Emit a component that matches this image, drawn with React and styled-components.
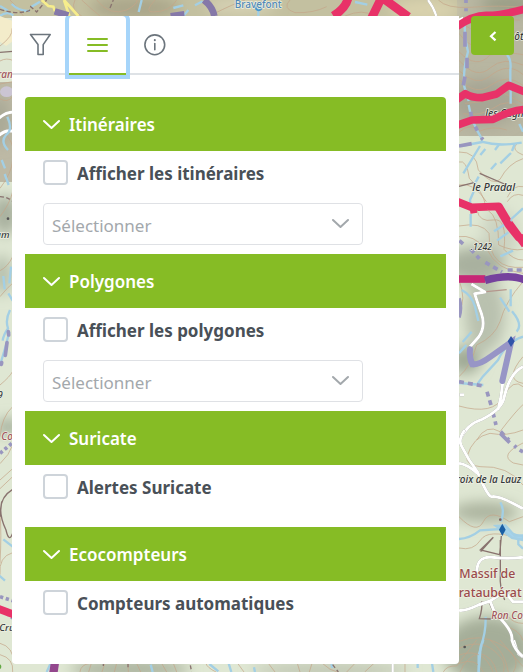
import React from "react";
import styled, { createGlobalStyle } from "styled-components";

const GlobalStyle = createGlobalStyle`
  * { box-sizing: border-box; }
  body {
    margin: 0;
    background: #dce4cf;
    font-family: "Noto Sans", "Open Sans", sans-serif;
    color: #495057;
  }
`;

const green = "#86bc25";

const MapCanvas = styled.svg`
  position: fixed;
  inset: 0;
  width: 100%;
  height: 100%;
  z-index: -1;
`;

const Page = styled.div`
  display: flex;
  align-items: flex-start;
  gap: 12px;
  min-height: 100vh;
  padding: 16px 9px 8px 12px;
`;

const Panel = styled.main`
  flex: 1;
  min-width: 0;
  min-height: calc(100vh - 24px);
  background: #fff;
  border-radius: 0 0 4px 4px;
  overflow: hidden;
`;

const TabList = styled.div`
  display: flex;
  border-bottom: 2px solid #dee2e6;
`;

const Tab = styled.button`
  display: flex;
  align-items: center;
  justify-content: center;
  width: 57px;
  height: 59px;
  margin-bottom: -2px;
  padding: 0;
  border: 0;
  border-bottom: 2px solid ${(p) => (p.$active ? green : "transparent")};
  border-radius: ${(p) => (p.$active ? "4px 4px 0 0" : "0")};
  background: none;
  color: ${(p) => (p.$active ? green : "#6c757d")};
  box-shadow: ${(p) => (p.$active ? "0 0 0 4px #a6d5fa" : "none")};
  outline: none;
  cursor: pointer;
`;

const TabIcon = styled.svg`
  width: 23px;
  height: 23px;
  fill: none;
  stroke: currentColor;
`;

const Accordion = styled.div`
  padding: 22px 13px 12px;
`;

const SectionHeader = styled.button`
  display: flex;
  align-items: center;
  gap: 9px;
  width: 100%;
  height: 54px;
  padding: 2px 18px 0;
  border: 0;
  border-radius: ${(p) => (p.$first ? "4px 4px 0 0" : "0")};
  background: ${green};
  color: #fff;
  font: 600 17px/24px "Noto Sans", "Open Sans", sans-serif;
  text-align: left;
  cursor: pointer;
`;

const Chevron = styled.svg`
  width: 17px;
  height: 17px;
  fill: none;
  stroke: currentColor;
  stroke-width: 2;
  stroke-linecap: round;
  stroke-linejoin: round;
`;

const SectionBody = styled.div`
  display: flex;
  flex-direction: column;
  gap: 18px;
  min-height: 62px;
  padding: 8px 18px 9px;
`;

const CheckRow = styled.label`
  display: flex;
  align-items: center;
  gap: 9px;
  height: 26px;
  font-size: 17px;
  font-weight: 700;
  line-height: 26px;
`;

const CheckText = styled.span`
  padding-top: 3px;
`;

const Checkbox = styled.input`
  appearance: none;
  flex: none;
  width: 25px;
  height: 25px;
  margin: 0;
  border: 2px solid #ced4da;
  border-radius: 4px;
  background: #fff;
  &:checked { background: ${green}; border-color: ${green}; }
`;

const SelectBox = styled.div`
  display: grid;
  align-items: center;
  width: 83%;
  color: #a3a8ac;
  > * { grid-area: 1 / 1; }
  > svg { justify-self: end; margin-right: 14px; pointer-events: none; }
`;

const Select = styled.select`
  appearance: none;
  width: 100%;
  height: 42px;
  padding: 3px 36px 0 8px;
  border: 1px solid #dfe1e5;
  border-radius: 4px;
  background: #fff;
  color: #a3a8ac;
  font: 400 17px/24px "Noto Sans", "Open Sans", sans-serif;
`;

const CollapseButton = styled.button`
  display: flex;
  align-items: center;
  justify-content: center;
  width: 43px;
  height: 39px;
  padding: 0;
  border: 0;
  border-radius: 4px;
  background: ${green};
  color: #fff;
  cursor: pointer;
`;

const Contours = styled.g`
  fill: none;
  stroke: #c4a588;
  stroke-width: 3;
  opacity: 0.7;
`;
const Streams = styled.g`
  fill: none;
  stroke: #a3cfe4;
  stroke-width: 7;
`;
const Roads = styled.g`
  fill: none;
  stroke: #fff;
  stroke-width: 9;
  stroke-linejoin: round;
  filter: drop-shadow(0 0 1px #888);
`;
const Routes = styled.g`
  fill: none;
  stroke: #e83268;
  stroke-width: 23;
  stroke-linejoin: round;
`;
const Boundaries = styled.g`
  fill: none;
  stroke: #9996bf;
  stroke-width: 11;
`;
const Paths = styled.g`
  fill: none;
  stroke: #89736f;
  stroke-width: 4;
`;
const MapLabel = styled.text`
  font-family: "Noto Sans", "Open Sans", sans-serif;
  font-size: ${(p) => p.$size || 30}px;
  font-style: ${(p) => (p.$upright ? "normal" : "italic")};
  font-weight: 500;
  fill: ${(p) => p.$color || "#33373a"};
  stroke: #eef0e2;
  stroke-width: 4px;
  paint-order: stroke;
`;

/* Each strip of the map is drawn at three units per pixel. */
const Tile = ({ x = 0, y = 0, children }) => (
  <g transform={`translate(${x} ${y}) scale(0.33333)`}>{children}</g>
);

function TopTile() {
  return (
    <Tile>
      <Contours>
        <path d="M30 0Q52 20 70 48M225 0Q210 30 245 48M245 0Q275 28 300 48M290 0Q330 50 380 30Q410 15 412 0M465 0Q430 38 460 36Q510 35 530 0M640 42Q700 12 735 0M870 0Q845 25 885 38Q940 40 980 20M1035 48Q1090 25 1120 48M1315 0Q1340 26 1410 22Q1500 15 1569 22" />
      </Contours>
      <Streams>
        <path d="M425 0L416 36M520 24L550 16M585 16L608 4M550 48L565 30M775 24V48M1065 6L1102 14M0 48Q20 32 40 46M35 12Q60 36 90 32M0 18L24 32M120 5L92 22" />
      </Streams>
      <Paths strokeDasharray="13 7">
        <path d="M0 28Q50 45 88 32L92 20L110 36L140 0M330 24L340 0" />
      </Paths>
      <g fill="none" stroke="#f6ed8c" strokeWidth="8">
        <path d="M125 0L145 18L160 20L165 34M192 0L235 48M192 0L208 48" />
      </g>
      <Boundaries>
        <path d="M164 34L205 46M612 0Q638 20 643 48" stroke="#8578a8" strokeWidth="20" />
        <path d="M512 48L553 42" stroke="#8578a8" strokeWidth="18" />
        <path d="M1398 0V48" strokeDasharray="9 16" />
      </Boundaries>
      <Roads><path d="M1284 0Q1301 22 1309 48" strokeWidth="7" /></Roads>
      <Routes>
        <path d="M1044 -5Q1038 24 1000 48M1145 -8L1112 60M1145 -8L1225 50" strokeWidth="26" />
      </Routes>
      <circle cx="776" cy="22" r="9" fill="none" stroke="#4796cf" strokeWidth="5" />
      <MapLabel x="704" y="25" $size={30} $upright $color="#5188b7">Bravefont</MapLabel>
    </Tile>
  );
}

function LeftTiles() {
  return (
    <>
      <Tile>
        <path d="M0 48L36 62V125L18 138L0 125Z" fill="#f3ecca" />
        <ellipse cx="20" cy="275" rx="20" ry="16" fill="#cbc5d3" />
        <Contours>
          <path d="M0 138Q40 108 36 85M0 183Q20 172 40 182M0 252L38 245M0 296Q22 310 38 290M8 398Q30 410 38 440M0 565Q35 520 38 480M0 650Q30 610 38 575M0 812Q24 800 38 770M0 890Q25 860 38 850" />
        </Contours>
        <Roads><path d="M-5 356Q18 336 40 336M-5 408Q15 388 40 394" /></Roads>
        <Streams>
          <path d="M22 350Q40 390 18 405Q0 425 24 450M5 480L15 505M14 522L26 555M33 800L28 850M10 828L14 868M25 880L38 902M30 930Q15 960 24 985Q10 1005 8 1022" />
        </Streams>
        <Paths><path d="M0 157L38 154" /><path d="M0 590Q20 590 38 604" strokeDasharray="12 7" /></Paths>
        <circle cx="24" cy="656" r="4" fill="#555" />
        <MapLabel x="-8" y="235" $color="#a1565c">ran</MapLabel>
        <MapLabel x="-14" y="713" $size={29}>um</MapLabel>
      </Tile>
      <Tile y={330}>
        <Contours>
          <path d="M0 165Q30 140 38 124M0 320Q5 260 38 230M0 401Q28 375 38 345M0 450L38 416M0 476L38 440M0 700Q5 610 0 550M0 734Q-5 680 38 668M0 940Q40 950 42 1000" />
        </Contours>
        <Streams><path d="M10 628L38 650M-4 735L15 752M28 5Q15 60 0 105" /></Streams>
        <Boundaries>
          <path d="M21 38L16 76M26 15L25 5M5 98L4 103" strokeLinecap="round" />
          <path d="M0 370L38 338M0 800L38 812M20 850L38 864" strokeDasharray="10 8" />
        </Boundaries>
        <Paths><path d="M38 478Q-22 515 18 600Q27 640 38 610M5 515L0 560" /></Paths>
        <Routes><path d="M-5 836L42 854" /></Routes>
        <circle cx="-4" cy="1010" r="8" fill="#63a844" />
        <MapLabel x="-7" y="203" $size={27}>9</MapLabel>
        <MapLabel x="4" y="330" $size={30} $color="#a1565c">Col</MapLabel>
        <MapLabel x="-2" y="903" $size={29}>Cru</MapLabel>
      </Tile>
    </>
  );
}

function RightTiles() {
  return (
    <>
      <Tile x={440}>
        <Contours>
          <path d="M57 55Q90 105 130 80T240 60M57 100Q105 165 145 120T249 106M57 155Q110 210 150 165Q210 155 249 164M57 181Q110 242 153 202Q190 170 249 195M57 212Q108 260 145 232Q203 182 249 224M57 238Q110 290 153 255Q203 219 249 256M75 310Q160 306 190 279L249 310M70 341Q118 350 159 325Q202 292 249 324M57 397Q89 366 120 393Q160 376 200 390M57 456Q110 454 115 510Q160 561 180 538Q205 490 249 476M57 486Q80 478 88 535Q130 575 137 618M202 592Q220 553 249 560M57 555Q100 544 139 605M202 605Q220 576 249 586M230 432Q212 450 249 465" />
        </Contours>
        <Streams>
          <path d="M75 60Q71 100 84 155Q68 212 73 260L86 303M86 315Q94 365 123 412L127 426M201 165Q215 180 211 210V247M212 263V311M238 372L249 395M127 426Q75 437 57 437M127 426Q178 440 245 428M120 438L70 520M176 435L165 450M224 432L216 453M136 447L121 465M213 459L181 490M169 490L153 508M116 530L103 554M101 575L90 600L94 637M249 625L214 657" />
        </Streams>
        <Boundaries>
          <path d="M75 95V140M81 173V205M75 230L70 256M76 280L84 292M92 335L94 350M106 380L112 392M124 413L129 419M57 438L95 431" />
        </Boundaries>
        <Paths><path d="M119 520L200 555M57 559L102 548" /></Paths>
        <Roads><path d="M57 60L70 54" /></Roads>
        <MapLabel x="136" y="350" $size={30}>les Cagn</MapLabel>
        <Routes><path d="M50 80Q100 45 140 46T255 27M50 299L76 281Q95 293 125 293L170 282L206 256L255 276M50 376L96 360L159 358Q220 328 255 329M50 604L95 622L177 619L204 665L255 735" /></Routes>
        <MapLabel x="223" y="120" $size={30}>ôt</MapLabel>
        <MapLabel x="97" y="574" $size={32}>le Pradal</MapLabel>
      </Tile>
      <Tile x={440} y={210}>
        <Contours>
          <path d="M111 0Q118 38 160 30T192 118Q220 151 249 150M143 0Q177 20 176 105Q216 124 249 118M57 48Q125 35 147 70Q147 180 249 172M57 80Q98 72 142 120Q170 180 249 190M57 208Q80 275 57 300M249 215Q196 275 180 335Q164 380 110 405Q92 470 57 500M249 440Q190 510 249 520M57 588Q160 617 190 560T249 530M110 690Q139 640 180 665Q230 600 249 584" />
        </Contours>
        <Streams>
          <path d="M92 12V50M215 30L162 64M205 67L171 92M219 122L181 139M65 240Q95 255 105 290L115 333M95 365L68 396M57 430L79 405M180 263L208 305M212 238V289M216 304Q250 344 230 365M249 380Q200 395 174 450L128 500L113 521M57 519L130 525" />
        </Streams>
        <Boundaries>
          <path d="M58 92L76 108M92 117L118 146M136 157L186 186M203 180H249M57 515L129 528M141 545L153 585M159 608L168 645M182 665L207 690" strokeDasharray="15 12" />
          <path d="M57 265Q66 293 57 322" />
        </Boundaries>
        <Roads><path d="M94 222L135 246L104 251Q115 286 124 310Q138 350 116 381L90 410M60 690Q80 642 126 628Q188 598 193 560Q209 490 249 470M188 520L183 560L174 600M59 554H72" /></Roads>
        <Paths><path d="M139 245L200 239" stroke="#b5978d" /></Paths>
        <g fill="none" strokeLinecap="round" stroke="#9795c6" strokeWidth="18">
          <path d="M90 418Q87 445 97 463Q118 465 153 439L213 397L187 513" />
        </g>
        <Routes>
          <path d="M57 207H136" stroke="#c72776" />
          <path d="M135 211Q210 190 255 210" stroke="#75419d" />
          <path d="M170 -15L205 44L236 83L255 85M90 0L110 -3" />
        </Routes>
        <path d="M213 378L224 394L213 411L203 394Z" fill="#3154a9" />
        <MapLabel x="92" y="119" $size={26}>.1242</MapLabel>
      </Tile>
      <Tile x={440} y={430}>
        <Contours>
          <path d="M81 80Q98 20 150 10Q200 20 249 0M81 80Q76 105 120 110Q205 106 249 165M249 39Q175 75 220 99L249 105M57 260Q110 315 130 275T208 275L249 260M57 354Q100 364 122 330T235 325M57 634Q120 610 175 640Q249 680 220 726M57 655Q130 620 180 680Q199 700 190 726M57 675Q130 650 159 726M57 700Q110 680 130 726M195 588Q240 600 249 632M205 560Q220 580 249 580" />
        </Contours>
        <Streams>
          <path d="M57 327Q90 325 120 301L183 297Q220 313 249 321M181 217Q195 240 183 275M235 320V343L249 356M137 560Q138 610 122 650L116 726" />
          <path d="M168 288L196 286L224 317L249 316V330L216 324L197 309Z" fill="#a5d3ec" />
        </Streams>
        <Boundaries><path d="M181 10L209 38M223 47L229 53M239 60L249 66" /></Boundaries>
        <Paths><path d="M160 322L121 360L179 374L184 318M122 365L160 322M181 330V435Q178 470 194 510M125 514Q128 535 118 566L155 567M149 520Q165 565 190 565" /></Paths>
        <Roads>
          <path d="M74 0Q53 30 65 49Q85 90 112 125Q145 205 157 200Q180 197 249 236M57 100Q83 104 112 130M57 541Q75 544 115 525L150 513L194 485L219 515H249M150 513L165 550Q220 600 216 631Q224 660 249 680M110 430Q110 377 155 382Q202 388 249 382" />
        </Roads>
        <path d="M187 281L197 299L187 318L177 299Z" fill="#1b5fa4" />
        <circle cx="181" cy="269" r="4" fill="#7a6262" />
        <circle cx="74" cy="651" r="4" fill="#555" />
        <MapLabel x="48" y="158" $size={30}>roix de la Lauz</MapLabel>
        <MapLabel x="58" y="445" $size={37} $upright $color="#9a4b4c">Massif de</MapLabel>
        <MapLabel x="56" y="500" $size={37} $upright $color="#9a4b4c">rataubérat</MapLabel>
        <MapLabel x="154" y="567" $size={30} $color="#a1565c">Ron Co</MapLabel>
      </Tile>
    </>
  );
}

function BottomTile() {
  return (
    <Tile y={640}>
      <Contours>
        <path d="M0 44Q42 55 38 96M240 96Q242 74 270 70M266 96L274 70M306 96L315 68M343 96L350 70M385 96L384 68M422 96L410 70M500 96L485 70M530 96L520 70M648 96Q620 82 618 70M732 96L713 70M825 96L805 70M900 96L892 70M928 96L936 70M967 70Q990 92 1012 96M1040 96L1065 70M1094 96L1122 70M1215 96V70M1330 96Q1340 76 1370 78Q1399 40 1430 0M1380 96Q1400 50 1438 40Q1480 50 1490 96M1470 0Q1515 35 1525 96M1500 0L1569 80" />
      </Contours>
      <Streams><path d="M152 70L140 96M452 74L458 96M628 72L655 94M686 70L694 96M762 82L765 96M994 72L997 84M1253 72V84M1296 70L1300 96M1450 0L1436 45V96" /></Streams>
      <Paths><path d="M310 70V78M384 70V82M571 76L575 96M998 74L1015 96" strokeDasharray="12 8" /></Paths>
      <Roads><path d="M1178 72V96M1542 0L1555 42L1569 52" strokeWidth="7" /></Roads>
      <path d="M166 60L160 100" stroke="#93478d" strokeWidth="25" />
    </Tile>
  );
}

function MapBackground() {
  return (
    <MapCanvas viewBox="0 0 523 672" preserveAspectRatio="xMinYMin slice" role="img" aria-label="Carte">
      <defs>
        <filter id="relief" x="-40%" y="-40%" width="180%" height="180%">
          <feGaussianBlur stdDeviation="7" />
        </filter>
      </defs>
      <rect width="523" height="672" fill="#dfe7d3" />
      <rect width="523" height="18" fill="#c3c0a0" />
      <rect y="82" width="14" height="100" fill="#bdb9a5" />
      <rect x="457" width="66" height="136" fill="#b8b6a1" />
      <g filter="url(#relief)">
        <ellipse cx="135" cy="8" rx="45" ry="12" fill="#aaa68a" />
        <ellipse cx="240" cy="6" rx="35" ry="8" fill="#d8d3b6" />
        <ellipse cx="425" cy="10" rx="35" ry="12" fill="#d9d2ad" />
        <ellipse cx="510" cy="4" rx="30" ry="9" fill="#979b83" />
        <ellipse cx="485" cy="102" rx="35" ry="24" fill="#a7a694" />
        <ellipse cx="500" cy="235" rx="18" ry="26" fill="#ccd3c1" />
        <ellipse cx="475" cy="265" rx="30" ry="18" fill="#a9b19f" />
        <ellipse cx="485" cy="315" rx="20" ry="38" fill="#b9c1af" />
        <ellipse cx="465" cy="360" rx="16" ry="14" fill="#9fa994" />
        <ellipse cx="485" cy="512" rx="34" ry="10" fill="#aab29d" />
        <ellipse cx="488" cy="650" rx="45" ry="34" fill="#a5ae99" />
        <ellipse cx="0" cy="120" rx="10" ry="25" fill="#a8a895" />
        <ellipse cx="5" cy="215" rx="14" ry="20" fill="#a9b19f" />
        <ellipse cx="2" cy="275" rx="10" ry="20" fill="#b6bfac" />
        <ellipse cx="8" cy="427" rx="12" ry="8" fill="#a0ab97" />
        <ellipse cx="130" cy="669" rx="60" ry="9" fill="#a9b19c" />
        <ellipse cx="330" cy="670" rx="80" ry="6" fill="#b8beaa" />
      </g>
      <TopTile />
      <LeftTiles />
      <BottomTile />
      <RightTiles />
    </MapCanvas>
  );
}

const ChevronDown = () => (
  <Chevron viewBox="0 0 17 17" aria-hidden="true"><path d="M1 4L8.5 11L16 4" /></Chevron>
);

const sections = [
  { title: "Itinéraires", label: "Afficher les itinéraires", select: true },
  { title: "Polygones", label: "Afficher les polygones", select: true },
  { title: "Suricate", label: "Alertes Suricate" },
  { title: "Ecocompteurs", label: "Compteurs automatiques" },
];

function Section({ title, label, select, first }) {
  return (
    <section>
      <SectionHeader type="button" aria-expanded="true" $first={first}>
        <ChevronDown />
        {title}
      </SectionHeader>
      <SectionBody>
        <CheckRow>
          <Checkbox type="checkbox" />
          <CheckText>{label}</CheckText>
        </CheckRow>
        {select && (
          <SelectBox>
            <Select aria-label={title} defaultValue="">
              <option value="">Sélectionner</option>
            </Select>
            <ChevronDown />
          </SelectBox>
        )}
      </SectionBody>
    </section>
  );
}

export default function App() {
  return (
    <>
      <GlobalStyle />
      <MapBackground />
      <Page>
        <Panel>
          <TabList role="tablist">
            <Tab type="button" role="tab" aria-label="Filtres">
              <TabIcon viewBox="0 0 23 23" strokeWidth="1.6" strokeLinejoin="round">
                <path d="M1.5 1.5H21.2L14.2 11.6V21.5H9V11.6Z" />
              </TabIcon>
            </Tab>
            <Tab type="button" role="tab" aria-label="Couches" aria-selected="true" $active>
              <TabIcon viewBox="0 0 23 23" strokeWidth="2" strokeLinecap="round">
                <path d="M2 6H21M2 12H21M2 18H21" />
              </TabIcon>
            </Tab>
            <Tab type="button" role="tab" aria-label="Informations">
              <TabIcon viewBox="0 0 23 23" strokeWidth="1.6" strokeLinecap="round">
                <circle cx="11.8" cy="11.8" r="9.9" />
                <path d="M11.8 10.5V16.8" />
                <path d="M11.8 7V7.2" strokeWidth="2" />
              </TabIcon>
            </Tab>
          </TabList>
          <Accordion>
            {sections.map((s, i) => (
              <Section key={s.title} {...s} first={i === 0} />
            ))}
          </Accordion>
        </Panel>
        <CollapseButton type="button" aria-label="Replier le panneau">
          <svg width="10" height="12" viewBox="0 0 10 12" fill="none" stroke="currentColor" strokeWidth="2.2" aria-hidden="true">
            <path d="M7.5 2L3 6.2L7.5 10.4" />
          </svg>
        </CollapseButton>
      </Page>
    </>
  );
}
